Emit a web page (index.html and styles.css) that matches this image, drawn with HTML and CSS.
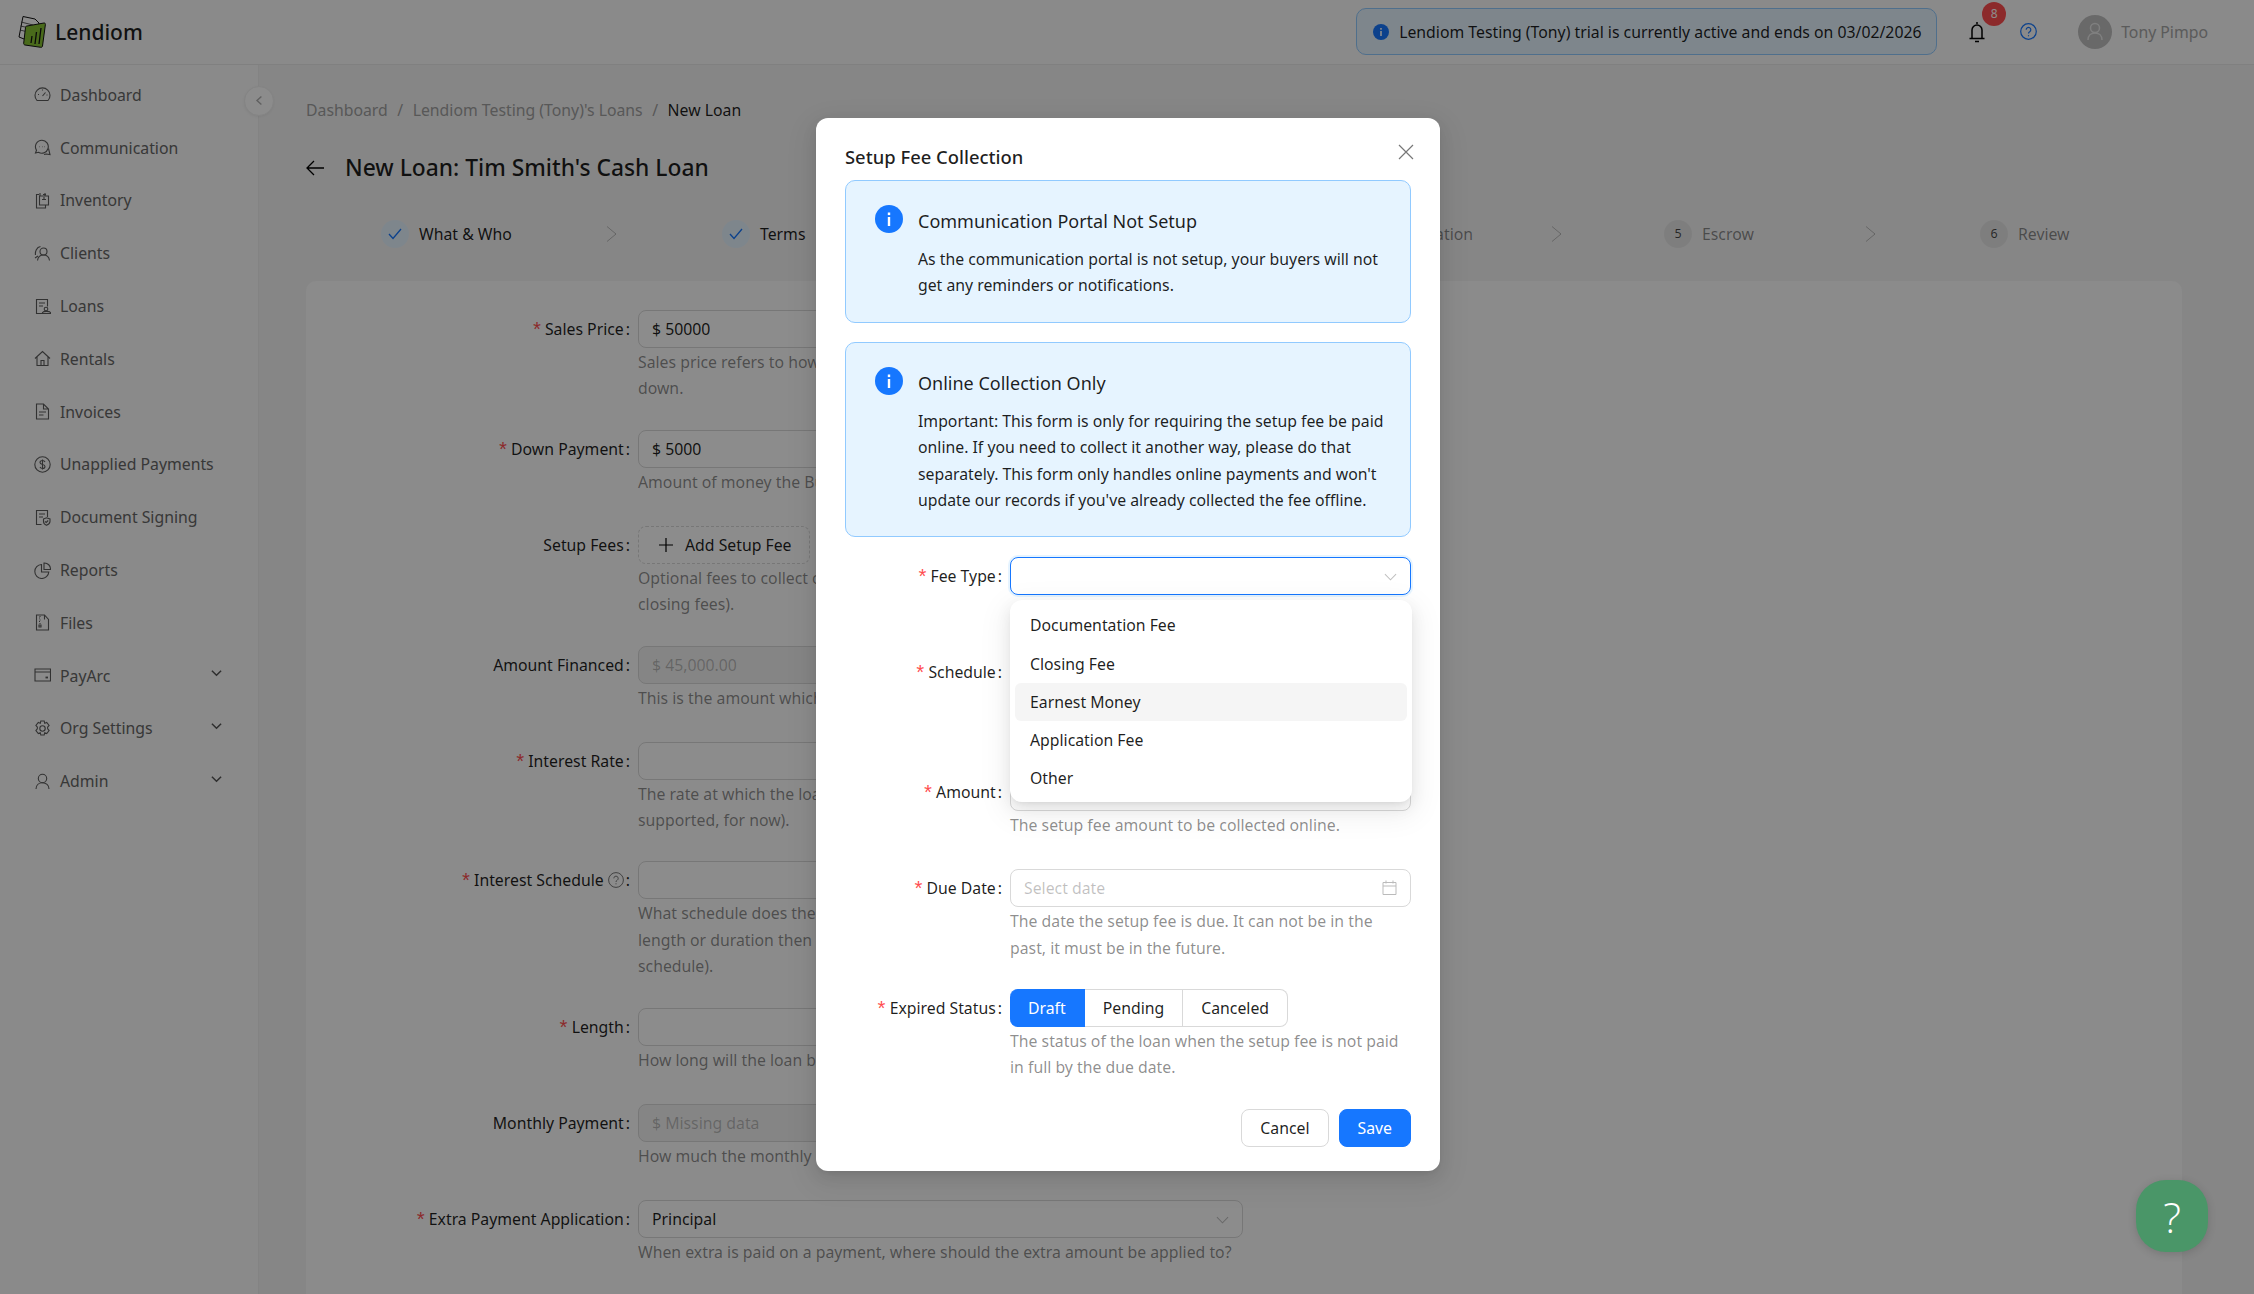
FILE: index.html
```html
<!DOCTYPE html>
<html lang="en">
<head>
    <meta charset="UTF-8">
    <meta name="viewport" content="width=device-width, initial-scale=1.0">
    <title>New Loan - Lendiom</title>
    <link rel="stylesheet" href="styles.css">
</head>
<body>
    <header class="topbar">
        <div class="brand">
            <svg class="brand-logo" viewBox="0 0 28 34" width="28" height="34">
                <path d="M5 1.500 17 4l4 4-1 6-14 10-5-2z" fill="#fff" stroke="#111" stroke-width="1"/>
                <path d="M3 7l12 3M2.500 11l9 2M2 15l6 1.500" stroke="#333" stroke-width="0.8"/>
                <path d="M9 11 26 8c1 0 1.500 .5 1.400 1.500L24.500 31c-.2 1-.8 1.500-1.800 1.300L7 30c-1-.2-1.400-.9-1.300-1.800L7.500 12.500C7.600 11.500 8 11.200 9 11z" fill="#86c232" stroke="#111" stroke-width="1"/>
                <path d="M13 28l1-7M17 29l1.500-12M21 29l2-16" stroke="#111" stroke-width="1.300"/>
            </svg>
            <span class="brand-name">Lendiom</span>
        </div>
        <div class="topbar-right">
            <div class="trial-banner">
                <svg viewBox="0 0 16 16" width="16" height="16"><circle cx="8" cy="8" r="8" fill="#1677ff"/><rect x="7.200" y="7" width="1.600" height="5" fill="#fff"/><rect x="7.200" y="4" width="1.600" height="1.700" fill="#fff"/></svg>
                <span>Lendiom Testing (Tony) trial is currently active and ends on 03/02/2026</span>
            </div>
            <div class="bell">
                <svg viewBox="0 0 18 22" width="18" height="22" fill="none" stroke="#000" stroke-width="1.500"><path d="M9 1v2M4 17V9a5 5 0 0 1 10 0v8M1.500 17.500h15M7 20.500h4"/></svg>
                <span class="bell-badge">8</span>
            </div>
            <svg class="help-icon" viewBox="0 0 17 17" width="17" height="17" fill="none" stroke="#1677ff" stroke-width="1.200"><circle cx="8.500" cy="8.500" r="7.800"/><path d="M6.200 6.700a2.300 2.300 0 1 1 3.500 2c-.8.500-1.200.9-1.200 1.800"/><path d="M8.500 12.200v1.100"/></svg>
            <div class="user">
                <span class="avatar"><svg viewBox="0 0 34 34" width="34" height="34" fill="none" stroke="#e8e8e8" stroke-width="1.500"><circle cx="17" cy="13" r="4.500"/><path d="M10 25c0-4.500 3-7 7-7s7 2.500 7 7"/></svg></span>
                <span class="user-name">Tony Pimpo</span>
            </div>
        </div>
    </header>

    <div class="layout">
        <aside class="sidebar">
            <button class="collapse-btn"><svg viewBox="0 0 10 12" width="8" height="11" fill="none" stroke="#b0b0b0" stroke-width="1.800"><path d="M8 1 2.500 6 8 11"/></svg></button>
            <nav class="menu">
                <a class="menu-item"><svg class="menu-icon" viewBox="0 0 17 17"><path d="M3 14.500a7.500 7.500 0 1 1 11 0z"/><path d="M8.500 10l3-3.500M4 8.500h1M8.500 3.500v1M12.500 9h1"/></svg>Dashboard</a>
                <a class="menu-item"><svg class="menu-icon" viewBox="0 0 17 17"><path d="M8 1.200a6.500 6.500 0 0 0-5.500 10L1.500 14l3-.7A6.500 6.500 0 1 0 8 1.200z"/><path d="M14.500 9.500 16 15.500l-4-.5-2 .5M5.500 7.700h.5M8 7.700h.5M10.500 7.700h.5"/></svg>Communication</a>
                <a class="menu-item"><svg class="menu-icon" viewBox="0 0 17 17"><path d="M5 2.500H2.500v13.500h9V13M9 2.500h3M6 1v3M11 1v3"/><path d="M5.500 4h9v9h-9z"/><path d="M8 7.500h4M10 5v2"/></svg>Inventory</a>
                <a class="menu-item"><svg class="menu-icon" viewBox="0 0 17 17"><circle cx="9.500" cy="6.500" r="3.500"/><path d="M3.500 15.500c.5-3.500 3-5.500 6-5.500s5.500 2 6 5.500M1.500 10c-.5-3 1-8 5-8.500M1 13l3-2"/></svg>Clients</a>
                <a class="menu-item"><svg class="menu-icon" viewBox="0 0 17 17"><path d="M8 15.500H2.500v-14h11v7M5 5h6M5 8h4"/><circle cx="12" cy="11" r="1.800"/><path d="M8.500 15.500h8v-1c-1-1.500-7-1.500-8 0z"/></svg>Loans</a>
                <a class="menu-item"><svg class="menu-icon" viewBox="0 0 17 17"><path d="M1 8.500 8.500 1.500 16 8.500M3 7v8.500h11V7"/><path d="M7 15.500v-5h3v5"/></svg>Rentals</a>
                <a class="menu-item"><svg class="menu-icon" viewBox="0 0 17 17"><path d="M9.500 1H2.500v15h12V6zM9.500 1v5h5"/><path d="M5 9h7M5 12h4.500"/></svg>Invoices</a>
                <a class="menu-item"><svg class="menu-icon" viewBox="0 0 17 17"><circle cx="8.500" cy="8.500" r="7.700"/><path d="M11 6c-.5-1-1.500-1.500-2.500-1.500C7 4.500 6 5.300 6 6.500c0 2.800 5 1.200 5 4 0 1.200-1 2-2.500 2-1 0-2-.5-2.500-1.500M8.500 3.500v10"/></svg>Unapplied Payments</a>
                <a class="menu-item"><svg class="menu-icon" viewBox="0 0 17 17"><path d="M7.500 15.500h-5v-14h11v6.500M5 5h6M5 8h4"/><path d="M9.500 10l3-1.200 3.500 1.200v2.500c0 2-1.500 3-3.500 3.800-2-.8-3-1.800-3-3.800z"/><path d="M11 12.300l1.200 1.200 2-2"/></svg>Document Signing</a>
                <a class="menu-item"><svg class="menu-icon" viewBox="0 0 17 17"><path d="M7.500 2.500a7 7 0 1 0 7.300 7.500H7.500z"/><path d="M10 1h.5a6 6 0 0 1 6 6v.5H10z"/></svg>Reports</a>
                <a class="menu-item"><svg class="menu-icon" viewBox="0 0 17 17"><path d="M2.500 1h8l4 4.500V16h-12zM10.500 1v4.500"/><path d="M6 2v1M5 4h1M6 5.500v1M5 7.500h1M6 9v1M5 11h2v2H5z"/></svg>Files</a>
                <a class="menu-item"><svg class="menu-icon" viewBox="0 0 17 17"><path d="M1 2h15.500v12H1zM1 5h15.500"/><path d="M11.500 10.500H14" stroke-width="1.800"/></svg>PayArc<svg class="menu-arrow" viewBox="0 0 12 8"><path d="M1 1.500 6 6.500 11 1.500"/></svg></a>
                <a class="menu-item"><svg class="menu-icon" viewBox="0 0 17 17"><path d="M6.800 1h3.400l.5 2.300 2-.9 2.400 3-1.500 1.800.1 1.600 1.400 1.800-2.400 3-2-.9-.5 2.300H6.800l-.5-2.300-2 .9-2.400-3 1.400-1.800.1-1.600L1.900 5.400l2.400-3 2 .9z"/><circle cx="8.500" cy="8.500" r="2.700"/></svg>Org Settings<svg class="menu-arrow" viewBox="0 0 12 8"><path d="M1 1.500 6 6.500 11 1.500"/></svg></a>
                <a class="menu-item"><svg class="menu-icon" viewBox="0 0 17 17"><circle cx="8.500" cy="5.500" r="4.200"/><path d="M2 16c0-4 3-6.300 6.500-6.300S15 12 15 16"/></svg>Admin<svg class="menu-arrow" viewBox="0 0 12 8"><path d="M1 1.500 6 6.500 11 1.500"/></svg></a>
            </nav>
        </aside>

        <main class="content">
            <div class="breadcrumb">
                <span>Dashboard</span><i>/</i><span>Lendiom Testing (Tony)'s Loans</span><i>/</i><span class="crumb-current">New Loan</span>
            </div>
            <div class="page-title">
                <svg viewBox="0 0 18 16" width="18" height="16" fill="none" stroke="#000" stroke-width="1.300"><path d="M8 1 1 8l7 7M1 8h17"/></svg>
                <h1>New Loan: Tim Smith's Cash Loan</h1>
            </div>

            <div class="steps">
                <div class="step step-a"><span class="step-dot done"><svg viewBox="0 0 14 12" width="14" height="12" fill="none" stroke="#1677ff" stroke-width="1.300"><path d="M1 6l4 4.500L13 1"/></svg></span><span class="step-name done-name">What &amp; Who</span><svg class="step-arrow" viewBox="0 0 11 16"><path d="M1 .5 10 8 1 15.500"/></svg></div>
                <div class="step step-b"><span class="step-dot done"><svg viewBox="0 0 14 12" width="14" height="12" fill="none" stroke="#1677ff" stroke-width="1.300"><path d="M1 6l4 4.500L13 1"/></svg></span><span class="step-name done-name">Terms</span><svg class="step-arrow" viewBox="0 0 11 16"><path d="M1 .5 10 8 1 15.500"/></svg></div>
                <div class="step step-c"></div>
                <div class="step step-d"><span class="step-dot">4</span><span class="step-name">Confirmation</span><svg class="step-arrow" viewBox="0 0 11 16"><path d="M1 .5 10 8 1 15.500"/></svg></div>
                <div class="step step-e"><span class="step-dot">5</span><span class="step-name">Escrow</span><svg class="step-arrow" viewBox="0 0 11 16"><path d="M1 .5 10 8 1 15.500"/></svg></div>
                <div class="step"><span class="step-dot">6</span><span class="step-name">Review</span></div>
            </div>

            <div class="card">
                <div class="row">
                    <label class="field-label req">Sales Price</label>
                    <div><div class="input">$ 50000</div><p class="help">Sales price refers to how<br>down.</p></div>
                </div>
                <div class="row">
                    <label class="field-label req">Down Payment</label>
                    <div><div class="input">$ 5000</div><p class="help">Amount of money the Buyer</p></div>
                </div>
                <div class="row">
                    <label class="field-label">Setup Fees</label>
                    <div><div class="add-fee"><svg viewBox="0 0 14 14" width="14" height="14" fill="none" stroke="#000" stroke-width="1.200"><path d="M7 0v14M0 7h14"/></svg>Add Setup Fee</div><p class="help">Optional fees to collect or<br>closing fees).</p></div>
                </div>
                <div class="row">
                    <label class="field-label">Amount Financed</label>
                    <div><div class="input input-off">$ 45,000.00</div><p class="help">This is the amount which</p></div>
                </div>
                <div class="row">
                    <label class="field-label req">Interest Rate</label>
                    <div><div class="input"></div><p class="help">The rate at which the loan<br>supported, for now).</p></div>
                </div>
                <div class="row">
                    <label class="field-label req">Interest Schedule <svg class="label-tip" viewBox="0 0 16 16" width="16" height="16" fill="none" stroke="#777" stroke-width="1"><circle cx="8" cy="8" r="7.400"/><path d="M5.800 6.300a2.200 2.200 0 1 1 3.400 1.900c-.8.500-1.200.9-1.200 1.700M8 11.300v1"/></svg></label>
                    <div><div class="input"></div><p class="help">What schedule does the<br>length or duration then<br>schedule).</p></div>
                </div>
                <div class="row">
                    <label class="field-label req">Length</label>
                    <div><div class="input"></div><p class="help">How long will the loan be</p></div>
                </div>
                <div class="row">
                    <label class="field-label">Monthly Payment</label>
                    <div><div class="input input-off">$ Missing data</div><p class="help">How much the monthly</p></div>
                </div>
                <div class="row">
                    <label class="field-label req">Extra Payment Application</label>
                    <div><div class="input">Principal<svg class="select-arrow" viewBox="0 0 14 8"><path d="M1 1 7 7 13 1"/></svg></div><p class="help">When extra is paid on a payment, where should the extra amount be applied to?</p></div>
                </div>
            </div>
        </main>
    </div>

    <div class="mask"></div>

    <button class="float-help">?</button>

    <section class="modal">
        <svg class="modal-close" viewBox="0 0 16 16" width="16" height="16" fill="none" stroke="#777" stroke-width="1.200"><path d="M1 1l14 14M15 1 1 15"/></svg>
        <h2 class="modal-title">Setup Fee Collection</h2>

        <div class="alert">
            <svg class="alert-icon" viewBox="0 0 28 28" width="28" height="28"><circle cx="14" cy="14" r="14" fill="#1677ff"/><rect x="12.800" y="12" width="2.400" height="9" fill="#fff"/><rect x="12.800" y="7.500" width="2.400" height="2.600" fill="#fff"/></svg>
            <div>
                <div class="alert-title">Communication Portal Not Setup</div>
                <div class="alert-text">As the communication portal is not setup, your buyers will not<br>get any reminders or notifications.</div>
            </div>
        </div>
        <div class="alert">
            <svg class="alert-icon" viewBox="0 0 28 28" width="28" height="28"><circle cx="14" cy="14" r="14" fill="#1677ff"/><rect x="12.800" y="12" width="2.400" height="9" fill="#fff"/><rect x="12.800" y="7.500" width="2.400" height="2.600" fill="#fff"/></svg>
            <div>
                <div class="alert-title">Online Collection Only</div>
                <div class="alert-text">Important: This form is only for requiring the setup fee be paid<br>online. If you need to collect it another way, please do that<br>separately. This form only handles online payments and won't<br>update our records if you've already collected the fee offline.</div>
            </div>
        </div>

        <div class="modal-form">
            <div class="row">
                <label class="field-label req">Fee Type</label>
                <div class="fee-type">
                    <div class="input input-focus"><svg class="select-arrow" viewBox="0 0 14 8"><path d="M1 1 7 7 13 1"/></svg></div>
                    <ul class="dropdown">
                        <li>Documentation Fee</li>
                        <li>Closing Fee</li>
                        <li class="hovered">Earnest Money</li>
                        <li>Application Fee</li>
                        <li>Other</li>
                    </ul>
                </div>
            </div>
            <div class="row row-tall">
                <label class="field-label req">Schedule</label>
                <div><div class="input"></div></div>
            </div>
            <div class="row">
                <label class="field-label req">Amount</label>
                <div><div class="input"></div><p class="help">The setup fee amount to be collected online.</p></div>
            </div>
            <div class="row">
                <label class="field-label req">Due Date</label>
                <div>
                    <div class="input input-hint">Select date<svg class="date-icon" viewBox="0 0 15 15" fill="none" stroke="#bbb" stroke-width="1"><path d="M1 2.500h13v12H1zM1 6h13M4 .5v3M11 .5v3"/></svg></div>
                    <p class="help">The date the setup fee is due. It can not be in the<br>past, it must be in the future.</p>
                </div>
            </div>
            <div class="row">
                <label class="field-label req">Expired Status</label>
                <div>
                    <div class="segment">
                        <span class="segment-btn segment-on">Draft</span>
                        <span class="segment-btn">Pending</span>
                        <span class="segment-btn">Canceled</span>
                    </div>
                    <p class="help">The status of the loan when the setup fee is not paid<br>in full by the due date.</p>
                </div>
            </div>
        </div>

        <div class="modal-footer">
            <button class="btn">Cancel</button>
            <button class="btn btn-primary">Save</button>
        </div>
    </section>
</body>
</html>
```

FILE: styles.css
```css
* {
    box-sizing: border-box;
}

html, body {
    height: 100%;
    overflow: hidden;
}

body {
    margin: 0;
    font-family: "Noto Sans", "Open Sans", Arial, sans-serif;
    font-size: 15.8px;
    color: rgba(0, 0, 0, 0.88);
    background-color: #f5f5f5;
    position: relative;
}

/* top bar */
.topbar {
    height: 65px;
    display: flex;
    align-items: center;
    justify-content: space-between;
    background-color: #fbfbfb;
    border-bottom: 1px solid #eaeaea;
    padding-left: 18px;
}

.brand {
    display: flex;
    align-items: center;
    gap: 9px;
}

.brand-name {
    font-size: 21px;
    font-weight: 500;
}

.topbar-right {
    display: flex;
    align-items: center;
    height: 100%;
    padding-bottom: 1px;
}

.trial-banner {
    width: 581px;
    height: 47px;
    display: flex;
    align-items: center;
    gap: 10px;
    padding-left: 16px;
    background-color: #e6f4ff;
    border: 1px solid #91caff;
    border-radius: 10px;
    margin-right: 31px;
    white-space: nowrap;
}

.bell {
    position: relative;
    height: 22px;
    margin-right: 34px;
}

.bell-badge {
    position: absolute;
    left: 14px;
    top: -19px;
    width: 24px;
    height: 24px;
    border-radius: 50%;
    background-color: #ff4d4f;
    color: #fff;
    font-size: 12px;
    line-height: 24px;
    text-align: center;
}

.help-icon {
    margin-right: 41px;
}

.user {
    display: flex;
    align-items: center;
    gap: 9px;
    margin-right: 46px;
}

.avatar {
    width: 34px;
    height: 34px;
    border-radius: 50%;
    background-color: #bfbfbf;
    display: block;
}

.user-name {
    color: #a6a6a6;
}

/* sidebar */
.layout {
    display: flex;
    height: calc(100% - 65px);
    overflow: hidden;
}

.sidebar {
    width: 259px;
    flex: none;
    background-color: #fbfbfb;
    border-right: 1px solid #eeeeee;
    position: relative;
}

.collapse-btn {
    position: absolute;
    left: 244px;
    top: 21px;
    width: 30px;
    height: 30px;
    padding: 0;
    border: 1px solid #f0f0f0;
    border-radius: 50%;
    background-color: #ffffff;
    box-shadow: 0 1px 3px rgba(0, 0, 0, 0.06);
}

.menu {
    padding: 3.5px 0 0 34px;
}

.menu-item {
    height: 52.8px;
    display: flex;
    align-items: center;
    color: #666;
    position: relative;
}

.menu-icon {
    width: 17px;
    height: 17px;
    margin-right: 9px;
    fill: none;
    stroke: #5c5c5c;
    stroke-width: 1.1;
}

.menu-arrow {
    position: absolute;
    left: 177px;
    top: 20px;
    width: 11px;
    height: 8px;
    fill: none;
    stroke: #555;
    stroke-width: 1.6;
}

/* main column */
.content {
    flex: 1;
    padding: 0 72px 0 47px;
    min-width: 0;
    height: 100%;
    overflow: hidden;
}

.breadcrumb {
    height: 24px;
    margin-top: 33px;
    display: flex;
    align-items: center;
    color: #a0a0a0;
}

.breadcrumb i {
    font-style: normal;
    margin: 0 9.5px;
}

.crumb-current {
    color: rgba(0, 0, 0, 0.88);
}

.page-title {
    display: flex;
    align-items: center;
    gap: 21px;
    margin-top: 27.5px;
    height: 36px;
}

.page-title h1 {
    margin: 0;
    font-size: 22.8px;
    font-weight: 500;
}

.steps {
    display: flex;
    gap: 105px;
    margin-top: 31px;
    padding-left: 75px;
    height: 34px;
    align-items: center;
}

.step {
    display: flex;
    align-items: center;
    gap: 10px;
    flex: none;
    color: rgba(0, 0, 0, 0.45);
}

.step-a { width: 236px; }
.step-b { width: 190px; }
.step-c { width: 212px; }
.step-d { width: 228px; margin-right: -3px; padding-left: 3px; }
.step-e { width: 212px; margin-right: -1px; }

.step-dot {
    width: 28px;
    height: 28px;
    border-radius: 50%;
    background-color: rgba(0, 0, 0, 0.06);
    color: rgba(0, 0, 0, 0.7);
    display: flex;
    align-items: center;
    justify-content: center;
    font-size: 12.5px;
}

.step-dot.done {
    background-color: #e6f4ff;
}

.done-name {
    color: rgba(0, 0, 0, 0.88);
}

.step-arrow {
    width: 11px;
    height: 16px;
    margin-left: auto;
    fill: none;
    stroke: rgba(0, 0, 0, 0.25);
    stroke-width: 1;
}

.card {
    margin-top: 30px;
    padding-top: 29.5px;
    background-color: #fdfdfd;
    border-radius: 10px;
    height: 1100px;
}

/* shared form rows */
.row {
    display: grid;
    grid-template-columns: 332px 605px;
    min-height: 96px;
    padding-bottom: 28px;
}

.row-tall {
    min-height: 119.8px;
}

.field-label {
    height: 38px;
    display: flex;
    align-items: center;
    justify-content: flex-end;
    padding-right: 8px;
    white-space: pre;
}

.field-label::after {
    content: ":";
    margin-left: 2px;
}

.req::before {
    content: "*";
    color: #ff4d4f;
    font-family: "Liberation Mono", monospace;
    font-size: 20px;
    line-height: 1;
    margin: 6px 2px 0 0;
}

.input {
    height: 38px;
    display: flex;
    align-items: center;
    padding: 0 13px;
    border: 1px solid #d9d9d9;
    border-radius: 8px;
    background-color: #fff;
    position: relative;
}

.input-off {
    background-color: rgba(0, 0, 0, 0.04);
    color: rgba(0, 0, 0, 0.25);
}

.input-hint {
    color: rgba(0, 0, 0, 0.25);
}

.input-focus {
    border-color: #1677ff;
    box-shadow: 0 0 0 2px rgba(5, 145, 255, 0.1);
}

.select-arrow {
    position: absolute;
    right: 13px;
    top: 15px;
    width: 13px;
    height: 8px;
    fill: none;
    stroke: #bfbfbf;
    stroke-width: 1.1;
}

.date-icon {
    position: absolute;
    right: 13px;
    top: 10px;
    width: 15px;
    height: 15px;
}

.help {
    margin: 1px 0 0;
    line-height: 26.4px;
    color: rgba(0, 0, 0, 0.45);
    white-space: nowrap;
}

.add-fee {
    width: 172px;
    height: 38px;
    display: flex;
    align-items: center;
    gap: 12px;
    padding-left: 20px;
    border: 1px dashed #d9d9d9;
    border-radius: 8px;
    background-color: #fff;
}

/* overlay */
.mask {
    position: absolute;
    inset: 0;
    background-color: rgba(0, 0, 0, 0.45);
}

.float-help {
    position: absolute;
    left: 2136px;
    top: 1180px;
    width: 72px;
    height: 72px;
    border: 0;
    border-radius: 30px;
    background-color: #4a9668;
    color: #fff;
    font-family: "Open Sans", sans-serif;
    font-weight: 300;
    font-size: 42px;
    box-shadow: 0 2px 8px rgba(0, 0, 0, 0.15);
}

/* modal */
.modal {
    position: absolute;
    left: 816px;
    top: 118px;
    width: 624px;
    height: 1053px;
    padding: 0 29px;
    background-color: #fff;
    border-radius: 12px;
    box-shadow: 0 6px 16px rgba(0, 0, 0, 0.08), 0 3px 6px -4px rgba(0, 0, 0, 0.12), 0 9px 28px 8px rgba(0, 0, 0, 0.05);
}

.modal-close {
    position: absolute;
    right: 26px;
    top: 26px;
}

.modal-title {
    margin: 0;
    padding-top: 24px;
    height: 62px;
    line-height: 30px;
    font-size: 18.4px;
    font-weight: 500;
}

.alert {
    display: flex;
    gap: 15px;
    padding: 24px 10px 23px 29px;
    margin-bottom: 19px;
    background-color: #e6f4ff;
    border: 1px solid #91caff;
    border-radius: 10px;
}

.alert-icon {
    flex: none;
}

.alert-title {
    font-size: 18px;
    line-height: 33px;
    margin-bottom: 8px;
}

.alert-text {
    line-height: 26.4px;
}

.modal-form {
    margin-top: 20px;
}

.modal-form .row {
    grid-template-columns: 165px 401px;
}

.fee-type {
    position: relative;
}

.dropdown {
    position: absolute;
    left: 0;
    top: 43px;
    z-index: 5;
    width: 402px;
    margin: 0;
    padding: 6px 5px 5px;
    list-style: none;
    background-color: #fff;
    border-radius: 12px;
    box-shadow: 0 6px 16px rgba(0, 0, 0, 0.08), 0 3px 6px -4px rgba(0, 0, 0, 0.12), 0 9px 28px 8px rgba(0, 0, 0, 0.05);
}

.dropdown li {
    height: 38.2px;
    line-height: 38.2px;
    padding-left: 15px;
    border-radius: 6px;
}

.dropdown .hovered {
    background-color: #f5f5f5;
}

.segment {
    display: flex;
    height: 38px;
}

.segment-btn {
    display: flex;
    align-items: center;
    padding: 0 18px;
    border: 1px solid #d9d9d9;
    border-left-width: 0;
    background-color: #fff;
}

.segment-btn:last-child {
    border-radius: 0 8px 8px 0;
}

.segment-on {
    background-color: #1677ff;
    border-color: #1677ff;
    color: #fff;
    border-radius: 8px 0 0 8px;
}

.modal-footer {
    display: flex;
    justify-content: flex-end;
    gap: 10px;
}

.btn {
    height: 38px;
    padding: 0 18px;
    border: 1px solid #d9d9d9;
    border-radius: 8px;
    background-color: #fff;
    font: inherit;
    color: inherit;
}

.btn-primary {
    background-color: #1677ff;
    border-color: #1677ff;
    color: #fff;
}
```
